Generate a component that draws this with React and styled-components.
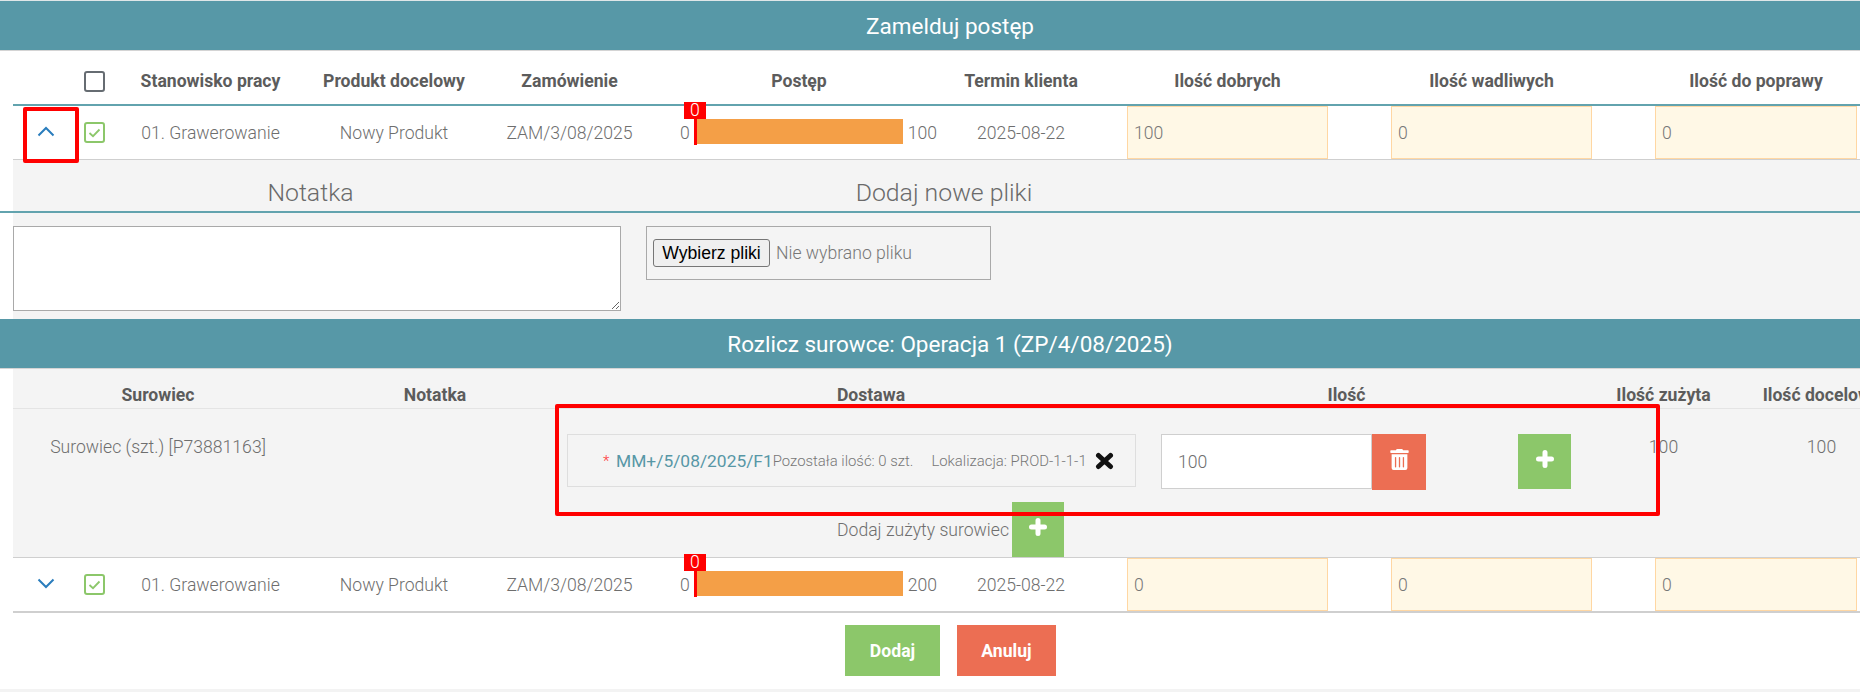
import React from "react";
import styled, { createGlobalStyle } from "styled-components";
import { FaTrashAlt } from "react-icons/fa";

const Global = createGlobalStyle`
  html, body { margin: 0; padding: 0; background: #fff; overflow: hidden; }
  body { font-family: Roboto, "Liberation Sans", sans-serif; font-weight: 300; color: #666; }
  * { box-sizing: border-box; }
`;

const Page = styled.div`
  position: relative;
  width: 1860px;
  height: 692px;
  overflow: hidden;
  border-top: 1px solid #dfe6e8;
  border-bottom: 3px solid #f3f3f3;
`;

const SectionTitle = styled.div`
  height: ${(p) => p.$h}px;
  background: #5798a7;
  border-bottom: 1px solid #d4d4d4;
  color: #fff;
  font-size: 22.5px;
  font-weight: 400;
  display: flex;
  align-items: center;
  justify-content: center;
  padding-left: 40px;
`;

const Table = styled.div`
  margin-left: 13px;
`;

const GRID = "62px 40px 191px 176px 175px 284px 160px 290px 264px 205px";

const HeadRow = styled.div`
  display: grid;
  grid-template-columns: ${GRID};
  height: 55px;
  border-bottom: 2px solid #62a3ae;
  align-items: center;
  padding-top: 7px;
`;

const HeadCell = styled.div`
  text-align: center;
  font-size: 17.6px;
  font-weight: 700;
  color: #5c5c5c;
  white-space: nowrap;
  padding: ${(p) => p.$pad || "0"};
`;

const DataRow = styled.div`
  display: grid;
  grid-template-columns: ${GRID};
  height: ${(p) => (p.$thick ? 55 : 54)}px;
  border-bottom: ${(p) => (p.$thick ? 2 : 1)}px solid #cfcfcf;
  align-items: center;
  background: #fff;
`;

const Cell = styled.div`
  text-align: center;
  font-size: 17.6px;
  color: #6e6e6e;
  white-space: nowrap;
`;

const ToggleCell = styled.div`
  display: flex;
  justify-content: center;
  padding-left: 4px;
  padding-bottom: 3px;
  color: #2a7dbd;
`;

const CheckCell = styled.div`
  display: flex;
  justify-content: center;
  padding-right: 1px;
`;

const CheckBox = styled.div`
  width: 21px;
  height: 21px;
  border: 2px solid ${(p) => (p.$on ? "#8cc76a" : "#666c72")};
  border-radius: 3px;
  background: #fff;
  display: flex;
  align-items: center;
  justify-content: center;
`;

const ProgressCell = styled.div`
  display: flex;
  align-items: center;
  gap: 5px;
  padding-left: 23px;
  font-size: 17.6px;
  color: #6e6e6e;
`;

const Bar = styled.div`
  position: relative;
  width: 208px;
  height: 25px;
  margin-top: -2px;
  background: #f49f47;
`;

const Marker = styled.div`
  position: absolute;
  left: -1px;
  top: 0;
  width: 3px;
  height: 26px;
  background: #f00;
`;

const MarkerLabel = styled.div`
  position: absolute;
  left: -11px;
  top: -17px;
  width: 22px;
  height: 17px;
  background: #f00;
  color: #fff;
  font-size: 17.6px;
  line-height: 17px;
  text-align: center;
`;

const QtyCell = styled.div`
  height: 100%;
  padding: ${(p) => p.$pad};
`;

const QtyBox = styled.div`
  height: 100%;
  background: #fff8e6;
  border: 1px solid #ffd7a3;
  padding-left: 6px;
  display: flex;
  align-items: center;
  font-size: 17.6px;
  color: #777;
`;

const NotePanel = styled.div`
  background: #f4f4f4;
  border-left: 13px solid #fff;
`;

const NoteHead = styled.div`
  display: grid;
  grid-template-columns: 595px 672px;
  height: 51px;
  align-items: center;
  padding-top: 13px;
  font-size: 24.8px;
  text-align: center;
  color: #6a6a6a;
`;

const Rule = styled.div`
  height: 2px;
  margin-left: -13px;
  background: #62a3ae;
`;

const NoteBody = styled.div`
  display: flex;
  align-items: flex-start;
  gap: 25px;
  height: 106px;
  padding-top: 13px;
`;

const TextArea = styled.textarea`
  display: block;
  width: 608px;
  height: 85px;
  background: #fff;
  border: 1px solid #a9a9a9;
  border-radius: 0;
  margin: 0;
`;

const FileBox = styled.div`
  width: 345px;
  height: 54px;
  border: 1px solid #a9a9a9;
  display: flex;
  align-items: center;
  padding-left: 6px;
  gap: 6px;
  font-size: 17.6px;
  color: #777;
`;

const FileButton = styled.button`
  width: 117px;
  height: 28px;
  padding: 0;
  background: #efefef;
  border: 1px solid #767676;
  border-radius: 3px;
  font-family: "Liberation Sans", Arial, sans-serif;
  font-size: 17.6px;
  font-weight: 400;
  color: #000;
`;

const RAW_GRID = "290px 264px 608px 343px 53px 185px 131px";

const RawHead = styled.div`
  display: grid;
  grid-template-columns: ${RAW_GRID};
  height: 40px;
  border-bottom: 1px solid #e4e4e4;
  align-items: center;
  padding-top: 12px;
`;

const RawPanel = styled.div`
  margin-left: 13px;
  background: #f4f4f4;
  overflow: hidden;
`;

const RawRow = styled.div`
  display: grid;
  grid-template-columns: ${RAW_GRID};
  height: 93px;
`;

const RawCell = styled.div`
  text-align: center;
  font-size: 17.6px;
  color: #6e6e6e;
  padding-top: 28px;
  line-height: 20px;
  white-space: nowrap;
`;

const DeliveryLine = styled.div`
  grid-column: 3 / span 3;
  display: flex;
  align-items: flex-start;
  padding-top: 25px;
`;

const DeliveryBox = styled.div`
  width: 569px;
  height: 53px;
  margin-right: 25px;
  border: 1px solid #dedede;
  display: flex;
  align-items: center;
  padding-left: 35px;
  white-space: nowrap;
`;

const Star = styled.span`
  color: #f33;
  font-size: 15px;
  width: 13px;
`;

const DeliveryCode = styled.span`
  font-size: 17.4px;
  font-weight: 400;
  color: #5797a6;
`;

const DeliveryMeta = styled.span`
  font-size: 14.9px;
  color: #777;
  margin-left: ${(p) => p.$ml || 0}px;
`;

const RemoveMark = styled.svg`
  flex: none;
  margin-left: 8px;
  color: #111;
`;

const QtyInput = styled.div`
  width: 211px;
  height: 55px;
  background: #fff;
  border: 1px solid #cfcfcf;
  display: flex;
  align-items: center;
  padding-left: 16px;
  font-size: 17.6px;
  color: #6e6e6e;
`;

const IconButton = styled.button`
  width: ${(p) => p.$w}px;
  height: ${(p) => p.$h}px;
  margin-left: ${(p) => p.$ml || 0}px;
  padding: 0;
  border: 0;
  border-radius: 0;
  background: ${(p) => (p.$danger ? "#ec6e53" : "#8cc76a")};
  color: #fff;
  display: flex;
  align-items: center;
  justify-content: center;
  padding-bottom: 6px;
  flex: none;
`;

const AddRow = styled.div`
  display: flex;
  align-items: center;
  gap: 3px;
  height: 56px;
  padding-left: 824px;
  border-bottom: 1px solid #cfcfcf;
  font-size: 17.6px;
  color: #6e6e6e;
`;

const Actions = styled.div`
  display: flex;
  gap: 17px;
  padding: 12px 0 0 845px;
`;

const ActionButton = styled.button`
  width: ${(p) => p.$w}px;
  height: 51px;
  border: 0;
  padding: 0;
  background: ${(p) => (p.$danger ? "#ec6e53" : "#8cc76a")};
  color: #fff;
  font-family: Roboto, sans-serif;
  font-size: 17.6px;
  font-weight: 700;
`;

const Annotation = styled.div`
  position: absolute;
  left: ${(p) => p.$x}px;
  top: ${(p) => p.$y}px;
  width: ${(p) => p.$w}px;
  height: ${(p) => p.$h}px;
  border: 4px solid #f00;
  border-radius: 2px;
  pointer-events: none;
`;

const Chevron = ({ up }) => (
  <svg width="18" height="11" viewBox="0 0 18 11" fill="none" stroke="currentColor" strokeWidth="2">
    <polyline points={up ? "1.5,9.5 9,2 16.5,9.5" : "1.5,1.5 9,9 16.5,1.5"} />
  </svg>
);

const Check = () => (
  <svg width="13" height="10" viewBox="0 0 13 10" fill="none" stroke="#8cc76a" strokeWidth="1.8">
    <polyline points="1.5,5 5,8.2 11.5,1.5" />
  </svg>
);

const PlusGlyph = () => (
  <svg width="18" height="18" viewBox="0 0 18 18" fill="none" stroke="currentColor" strokeWidth="5" strokeLinecap="round">
    <path d="M9 2.5V15.5M2.5 9H15.5" />
  </svg>
);

const HEADS = ["Stanowisko pracy", "Produkt docelowy", "Zamówienie", "Postęp", "Termin klienta"];

const OpRow = ({ up, total, good, thick }) => (
  <DataRow $thick={thick}>
    <ToggleCell>
      <Chevron up={up} />
    </ToggleCell>
    <CheckCell>
      <CheckBox $on>
        <Check />
      </CheckBox>
    </CheckCell>
    <Cell>01. Grawerowanie</Cell>
    <Cell>Nowy Produkt</Cell>
    <Cell>ZAM/3/08/2025</Cell>
    <ProgressCell>
      <span>0</span>
      <Bar>
        <Marker />
        <MarkerLabel>0</MarkerLabel>
      </Bar>
      <span>{total}</span>
    </ProgressCell>
    <Cell>2025-08-22</Cell>
    <QtyCell $pad="0 63px 0 26px">
      <QtyBox>{good}</QtyBox>
    </QtyCell>
    <QtyCell $pad="0 63px 0 0">
      <QtyBox>0</QtyBox>
    </QtyCell>
    <QtyCell $pad="0 3px 0 0">
      <QtyBox>0</QtyBox>
    </QtyCell>
  </DataRow>
);

export default function App() {
  return (
    <>
      <Global />
      <Page>
        <SectionTitle $h={50}>Zamelduj postęp</SectionTitle>
        <Table>
          <HeadRow>
            <span />
            <CheckCell>
              <CheckBox />
            </CheckCell>
            {HEADS.map((t) => (
              <HeadCell key={t}>{t}</HeadCell>
            ))}
            <HeadCell $pad="0 63px 0 26px">Ilość dobrych</HeadCell>
            <HeadCell $pad="0 63px 0 0">Ilość wadliwych</HeadCell>
            <HeadCell $pad="0 3px 0 0">Ilość do poprawy</HeadCell>
          </HeadRow>
          <OpRow up total={100} good={100} />
        </Table>

        <NotePanel>
          <NoteHead>
            <div>Notatka</div>
            <div>Dodaj nowe pliki</div>
          </NoteHead>
          <Rule />
          <NoteBody>
            <TextArea />
            <FileBox>
              <FileButton>Wybierz pliki</FileButton>
              <span>Nie wybrano pliku</span>
            </FileBox>
          </NoteBody>
        </NotePanel>

        <SectionTitle $h={50}>Rozlicz surowce: Operacja 1 (ZP/4/08/2025)</SectionTitle>
        <RawPanel>
          <RawHead>
            <HeadCell>Surowiec</HeadCell>
            <HeadCell>Notatka</HeadCell>
            <HeadCell>Dostawa</HeadCell>
            <HeadCell>Ilość</HeadCell>
            <span />
            <HeadCell>Ilość zużyta</HeadCell>
            <HeadCell>Ilość docelowa</HeadCell>
          </RawHead>
          <RawRow>
            <RawCell>Surowiec (szt.) [P73881163]</RawCell>
            <span />
            <DeliveryLine>
              <DeliveryBox>
                <Star>*</Star>
                <DeliveryCode>MM+/5/08/2025/F1</DeliveryCode>
                <DeliveryMeta>Pozostała ilość: 0 szt.</DeliveryMeta>
                <DeliveryMeta $ml={18}>Lokalizacja: PROD-1-1-1</DeliveryMeta>
                <RemoveMark width="19" height="18" viewBox="0 0 19 18" fill="none" stroke="currentColor" strokeWidth="5" strokeLinecap="round">
                  <path d="M3.5 3.5L15.5 14.5M15.5 3.5L3.5 14.5" />
                </RemoveMark>
              </DeliveryBox>
              <QtyInput>100</QtyInput>
              <IconButton $danger $w={54} $h={56}>
                <FaTrashAlt size={21} />
              </IconButton>
              <IconButton $w={53} $h={55} $ml={92}>
                <PlusGlyph />
              </IconButton>
            </DeliveryLine>
            <RawCell>100</RawCell>
            <RawCell>100</RawCell>
          </RawRow>
          <AddRow>
            <span>Dodaj zużyty surowiec</span>
            <IconButton $w={52} $h={55}>
              <PlusGlyph />
            </IconButton>
          </AddRow>
        </RawPanel>
        <Table>
          <OpRow total={200} good={0} thick />
        </Table>
        <Actions>
          <ActionButton $w={95}>Dodaj</ActionButton>
          <ActionButton $w={99} $danger>
            Anuluj
          </ActionButton>
        </Actions>

        <Annotation $x={23} $y={106} $w={56} $h={56} />
        <Annotation $x={555} $y={403} $w={1105} $h={112} />
      </Page>
    </>
  );
}
